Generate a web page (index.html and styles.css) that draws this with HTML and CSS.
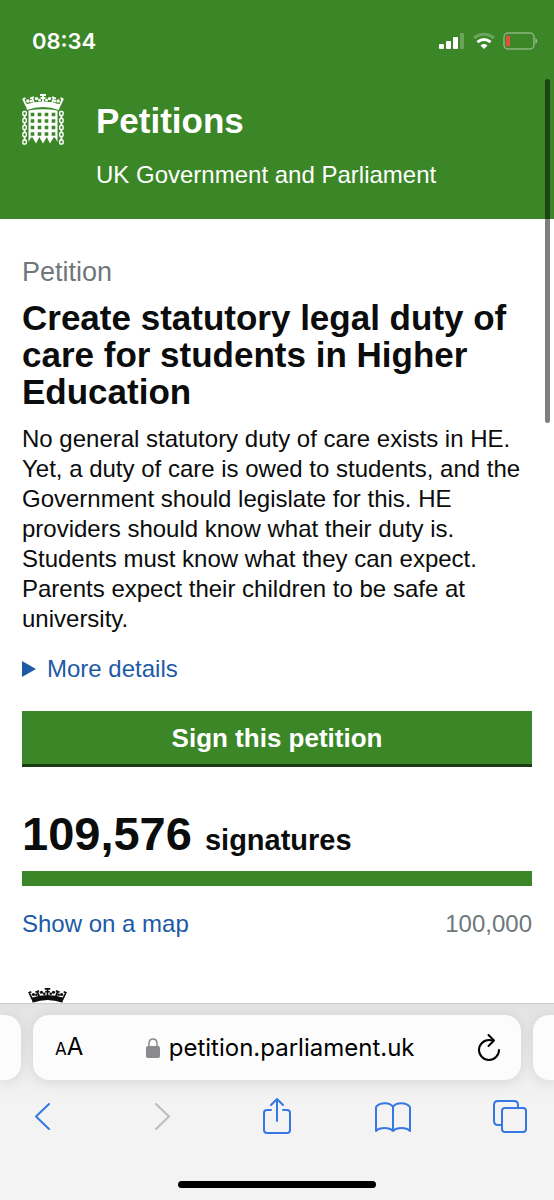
FILE: index.html
```
<!DOCTYPE html>
<html lang="en">
<head>
    <meta charset="UTF-8">
    <meta name="viewport" content="width=device-width, initial-scale=1.0">
    <title>Create statutory legal duty of care for students in Higher Education - Petitions</title>
    <link rel="stylesheet" href="styles.css">
</head>
<body>
    <svg class="symbols" aria-hidden="true">
        <symbol id="crown" viewBox="0 0 42 16">
            <path d="M5 16Q21 10 37 16L38.500 10.500Q21 4.500 3.500 10.500Z" fill="currentColor"/>
            <path d="M4.500 12L1.500 5.500M37.500 12L40.500 5.500M0.500 5.500L3.500 4M41.500 5.500L38.500 4M12 9L10 3.500M30 9L32 3.500M8 4.500L12 3M34 4.500L30 3M21 9V0.500M18 1H24M18.500 4H23.500" fill="none" stroke="currentColor" stroke-width="1.800"/>
            <g fill="currentColor">
                <circle cx="5.800" cy="7" r="1.700"/>
                <circle cx="9" cy="7.200" r="1.400"/>
                <circle cx="14.500" cy="4.600" r="1.700"/>
                <circle cx="17.500" cy="6.200" r="1.400"/>
                <circle cx="24.500" cy="6.200" r="1.400"/>
                <circle cx="27.500" cy="4.600" r="1.700"/>
                <circle cx="33" cy="7.200" r="1.400"/>
                <circle cx="36.200" cy="7" r="1.700"/>
            </g>
        </symbol>
    </svg>

    <header class="header">
        <div class="status-bar">
            <span class="time">08:34</span>
            <div class="status-icons">
                <svg width="26" height="16" viewBox="0 0 26 16" fill="#fff" aria-label="Signal">
                    <rect x="0" y="11" width="5" height="5" rx="1"/>
                    <rect x="7" y="8" width="5" height="8" rx="1"/>
                    <rect x="14" y="4" width="5" height="12" rx="1"/>
                    <rect x="21" y="0" width="4" height="16" rx="1" opacity="0.250"/>
                </svg>
                <svg width="22" height="16" viewBox="0 0 22 16" fill="none" stroke="#fff" stroke-width="3" aria-label="Wi-Fi">
                    <path d="M1 5Q11-2.500 21 5" opacity="0.250"/>
                    <path d="M4.400 9.200Q11 3.800 17.600 9.200"/>
                    <path d="M7.500 12.400Q11 9.600 14.500 12.400L11 16Z" fill="#fff" stroke="none"/>
                </svg>
                <svg width="35" height="18" viewBox="0 0 35 18" aria-label="Battery">
                    <rect x="1" y="1" width="30" height="16" rx="4" fill="none" stroke="#fff" stroke-opacity="0.400" stroke-width="1.500"/>
                    <path d="M32.500 6Q36 9 32.500 12Z" fill="#fff" opacity="0.500"/>
                    <rect x="3" y="3.500" width="4" height="11" rx="1.500" fill="#e94e3a"/>
                </svg>
            </div>
        </div>
        <a class="brand" href="#">
            <svg class="portcullis" viewBox="0 0 42 51" aria-hidden="true">
                <use href="#crown" width="42" height="16"/>
                <path d="M6.500 16.500Q21 14 35.500 16.500V48L33 43.500L31.500 43.500L28 49.500L25 43.500H24.500L21 49.500L17.500 43.500H17L14 49.500L10.500 43.500H9L6.500 48Z" fill="currentColor"/>
                <path d="M8.700 20.500H34M8.700 27H34M8.700 33.500H34M8.700 40H34" fill="none" stroke="#3b8626" stroke-width="3.400" stroke-dasharray="3.600 3.400"/>
                <g fill="none" stroke="currentColor" stroke-width="1.400">
                    <g id="chain">
                        <rect x="0.900" y="17.500" width="3.400" height="4" rx="1"/>
                        <rect x="0.900" y="24.500" width="3.400" height="4" rx="1"/>
                        <rect x="0.900" y="31.500" width="3.400" height="4" rx="1"/>
                        <rect x="0.900" y="38.500" width="3.400" height="4" rx="1"/>
                        <rect x="0.900" y="46" width="3.400" height="4" rx="1"/>
                        <path d="M2.600 21V25M2.600 28V32M2.600 35V39M2.600 42V46.500" stroke-width="1.800"/>
                    </g>
                    <use href="#chain" x="36.800"/>
                </g>
            </svg>
            <span class="brand-text">
                <strong>Petitions</strong>
                <span>UK Government and Parliament</span>
            </span>
        </a>
    </header>

    <main class="content">
        <p class="kicker">Petition</p>
        <h1>Create statutory legal duty of care for students in Higher Education</h1>
        <p class="intro">No general statutory duty of care exists in HE. Yet, a duty of care is owed to students, and the Government should legislate for this. HE providers should know what their duty is. Students must know what they can expect. Parents expect their children to be safe at university.</p>

        <details>
            <summary>
                <svg width="14" height="16" viewBox="0 0 14 16" aria-hidden="true"><path d="M0 0L14 8L0 16Z" fill="currentColor"/></svg>
                More details
            </summary>
        </details>

        <button class="sign-btn" type="button">Sign this petition</button>

        <p class="count"><span class="number">109,576</span> signatures</p>
        <div class="graph"></div>
        <div class="graph-footer">
            <a href="#">Show on a map</a>
            <span>100,000</span>
        </div>
        <svg class="crest" viewBox="0 0 42 16" aria-hidden="true"><use href="#crown" width="42" height="16"/></svg>
    </main>

    <footer class="browser-bar">
        <div class="tabs">
            <div class="tab-edge"></div>
            <div class="address">
                <button class="text-size" type="button" aria-label="Text size"><small>A</small>A</button>
                <div class="url">
                    <svg width="14" height="20" viewBox="0 0 14 20" aria-hidden="true">
                        <rect x="0" y="8" width="14" height="12" rx="2" fill="#8a8a8e"/>
                        <path d="M3 9V5.500Q3 1 7 1T11 5.500V9" fill="none" stroke="#8a8a8e" stroke-width="1.500"/>
                    </svg>
                    <span>petition.parliament.uk</span>
                </div>
                <button type="button" aria-label="Reload">
                    <svg width="24" height="28" viewBox="0 0 24 28" fill="none" stroke="#000" stroke-width="2" stroke-linecap="round" stroke-linejoin="round">
                        <path d="M16 6.500Q14 6 12 6A10 10 0 1 0 22 16"/>
                        <path d="M11.500 1L17 6.500L11.500 12"/>
                    </svg>
                </button>
            </div>
            <div class="tab-edge"></div>
        </div>
        <nav class="toolbar">
            <button type="button" aria-label="Back">
                <svg width="34" height="36" viewBox="0 0 34 36"><path d="M23 6L10 18.500L23 31"/></svg>
            </button>
            <button type="button" aria-label="Forward" disabled>
                <svg width="34" height="36" viewBox="0 0 34 36"><path d="M13 6L26 18.500L13 31"/></svg>
            </button>
            <button type="button" aria-label="Share">
                <svg width="34" height="36" viewBox="0 0 34 36"><path d="M11 12H7Q4 12 4 15V32Q4 35 7 35H27Q30 35 30 32V15Q30 12 27 12H23M17 23V1M11 7L17 1L23 7"/></svg>
            </button>
            <button type="button" aria-label="Bookmarks">
                <svg width="34" height="36" viewBox="0 0 34 36"><path d="M17 9C14 4 4 4 0 9V33C4 29 13 29 17 33C21 29 30 29 34 33V9C30 4 20 4 17 9V33"/></svg>
            </button>
            <button type="button" aria-label="Tabs">
                <svg width="34" height="36" viewBox="0 0 34 36"><path d="M9 27H5Q1 27 1 23V7Q1 3 5 3H21Q25 3 25 7V10"/><rect x="9" y="10" width="24" height="24" rx="3"/></svg>
            </button>
        </nav>
        <div class="home-indicator"></div>
    </footer>
    <div class="scroll-thumb"></div>
</body>
</html>
```

FILE: styles.css
```
* {
    margin: 0;
    padding: 0;
    box-sizing: border-box;
}

body {
    position: relative;
    display: flex;
    flex-direction: column;
    height: 100vh;
    overflow: hidden;
    background: #fff;
    color: #0b0c0c;
    font-family: "Liberation Sans", Arial, sans-serif;
    font-size: 24px;
    line-height: 30px;
}

button {
    border: none;
    background: none;
    color: inherit;
    font: inherit;
    cursor: pointer;
}

svg {
    display: block;
    flex: none;
    overflow: visible;
}

a {
    color: #1d5aa6;
    text-decoration: none;
}

.symbols {
    position: absolute;
    width: 0;
    height: 0;
}

/* Header */
.header {
    flex: none;
    padding: 26px 16px 29px 22px;
    background: #3b8626;
    color: #fff;
}

.status-bar {
    display: flex;
    align-items: center;
    justify-content: space-between;
    padding-left: 10px;
    font-family: Inter, sans-serif;
    font-size: 22px;
    font-weight: 600;
}

.status-icons {
    display: flex;
    align-items: center;
    gap: 8px;
}

.brand {
    display: flex;
    gap: 32px;
    margin-top: 38px;
    color: #fff;
}

.portcullis {
    width: 42px;
    height: 51px;
}

.brand-text {
    display: flex;
    flex-direction: column;
    gap: 20px;
    padding-top: 8px;
}

.brand-text strong {
    font-size: 35px;
    line-height: 38px;
}

/* Petition */
.content {
    flex: 1;
    min-height: 0;
    overflow: hidden;
    padding: 38px 22px 0;
}

.kicker {
    margin-bottom: 12px;
    color: #6f777b;
    font-size: 27px;
}

h1 {
    margin-bottom: 14px;
    font-size: 35px;
    line-height: 37px;
}

summary {
    display: flex;
    align-items: center;
    gap: 11px;
    margin: 20px 0 27px;
    color: #1d5aa6;
    list-style: none;
    cursor: pointer;
}

.sign-btn {
    display: block;
    width: 100%;
    height: 56px;
    border-bottom: 3px solid #1a3c11;
    background: #3b8626;
    color: #fff;
    font-size: 26px;
    font-weight: bold;
}

.count {
    margin: 40px 0 4px;
    font-size: 29px;
    font-weight: bold;
    line-height: 54px;
}

.number {
    margin-right: 5px;
    font-size: 47px;
}

.graph {
    height: 15px;
    background: #3b8626;
}

.graph-footer {
    display: flex;
    justify-content: space-between;
    margin-top: 23px;
    color: #6f777b;
}

.crest {
    width: 39px;
    margin: 49px 0 0 6px;
}

/* Browser controls */
.browser-bar {
    flex: none;
    border-top: 1px solid #cdcdcd;
    background: linear-gradient(#e3e3e4, #f3f3f4 50%);
}

.tabs {
    display: flex;
    gap: 12px;
    padding-top: 11px;
}

.tab-edge,
.address {
    height: 65px;
    background: #fcfcfc;
    box-shadow: 0 2px 14px rgba(0, 0, 0, 0.1);
}

.tab-edge {
    flex: none;
    width: 21px;
    border-radius: 0 16px 16px 0;
}

.tab-edge:last-child {
    border-radius: 16px 0 0 16px;
}

.address {
    display: flex;
    flex: 1;
    align-items: center;
    justify-content: space-between;
    padding: 0 20px 0 22px;
    border-radius: 16px;
    color: #000;
    font-family: Inter, sans-serif;
}

.text-size small {
    font-size: 17px;
}

.url {
    display: flex;
    align-items: center;
    gap: 9px;
}

.toolbar {
    display: flex;
    justify-content: space-between;
    padding: 18px 27px 0 26px;
}

.toolbar svg {
    fill: none;
    stroke: #3577e5;
    stroke-width: 2;
    stroke-linecap: round;
    stroke-linejoin: round;
}

.toolbar button:disabled svg {
    stroke: #bcbcbe;
}

.home-indicator {
    width: 198px;
    height: 7px;
    margin: 47px auto 12px;
    border-radius: 4px;
    background: #000;
}

.scroll-thumb {
    position: absolute;
    top: 79px;
    right: 4px;
    width: 5px;
    height: 344px;
    border-radius: 3px;
    background: rgba(0, 0, 0, 0.5);
}
```
